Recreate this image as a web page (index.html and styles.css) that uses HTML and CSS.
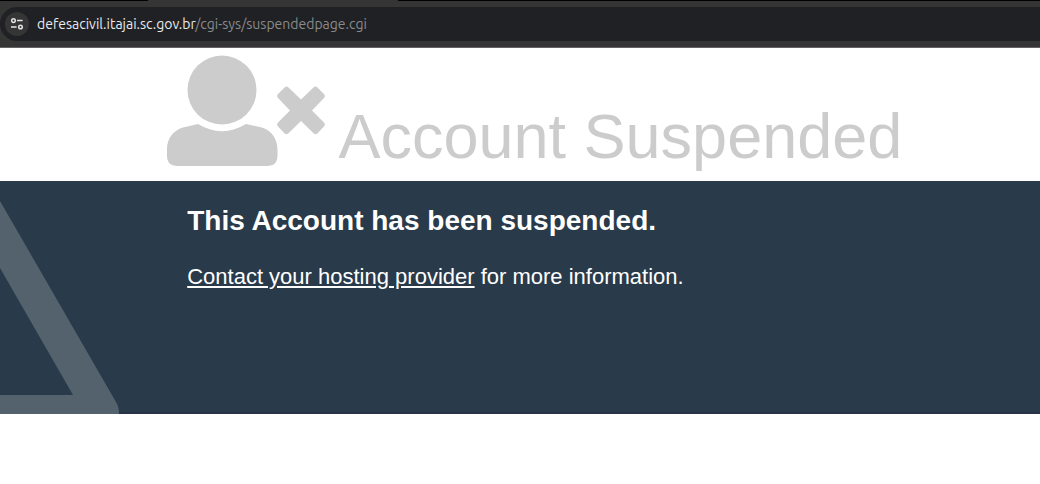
FILE: index.html
```html
<!DOCTYPE html>
<html lang="en">
<head>
    <meta charset="UTF-8">
    <meta name="viewport" content="width=device-width, initial-scale=1.0">
    <title>Account Suspended</title>
    <link rel="stylesheet" href="styles.css">
</head>
<body>
    <div class="browser">
        <div class="tabs">
            <div class="tab"></div>
        </div>
        <div class="address">
            <button class="site-info" aria-label="View site information">
                <svg width="14" height="14" viewBox="0 0 14 14" fill="none" stroke="#e3e3e3" stroke-width="1.5">
                    <circle cx="3.5" cy="3.6" r="1.8"/>
                    <path d="M7 3.6h5.6M1 10h5.6"/>
                    <circle cx="10.5" cy="10" r="1.8"/>
                </svg>
            </button>
            <span class="url">defesacivil.itajai.sc.gov.br<span class="path">/cgi-sys/suspendedpage.cgi</span></span>
        </div>
    </div>
    <header class="header">
        <svg class="user-icon" width="160" height="111" viewBox="-1 -0.5 160 111" fill="#ccc">
            <circle cx="55" cy="34.5" r="34.5"/>
            <path d="M31 68.500C46 78 64 78 79 68.500L93 71.500C104 74 110.500 83 110.500 94V100Q110.500 110.500 100 110.500H10.500Q0 110.500 0 100V94C0 83 6 75 16 72Z"/>
            <path d="M117.500 32L110.800 38.700Q109.300 40.500 110.800 42.200L123 55L110.800 67.200Q109.300 69 110.800 70.800L117.500 77.800Q119.500 79.800 121.500 77.800L134 65.500L146.500 77.800Q148.500 79.800 150.500 77.800L157.200 70.800Q158.700 69 157.200 67.200L145 55L157.200 42.200Q158.700 40.500 157.200 38.700L150.500 32Q148.500 30 146.500 32L134 44L121.500 32Q119.500 30 117.500 32Z"/>
        </svg>
        <h1>Account Suspended</h1>
    </header>
    <section class="info">
        <svg class="warning" width="120" height="214" viewBox="0 0 120 214" fill="#54626e">
            <path d="M0 1L116 202Q119 207 119 214H0V195H73L0 68Z"/>
        </svg>
        <h2>This Account has been suspended.</h2>
        <p><a href="#">Contact your hosting provider</a> for more information.</p>
    </section>
</body>
</html>
```
FILE: styles.css
```css
body {
    margin: 0;
    background: #fff;
    color: #fff;
    font-family: "Liberation Sans", Arial, sans-serif;
}
.browser {
    background: #353535;
    border-bottom: 1px solid #666164;
}
.tabs {
    height: 1px;
    margin-bottom: 6px;
    background: #000;
}
.tab {
    width: 250px;
    height: 1px;
    margin-left: 148px;
    background: #353535;
}
.address {
    display: flex;
    align-items: center;
    gap: 8px;
    height: 34px;
    margin-bottom: 6px;
    padding-left: 5px;
    background: #202124;
    border-radius: 17px 0 0 17px;
}
.site-info {
    display: flex;
    align-items: center;
    justify-content: center;
    width: 24px;
    height: 24px;
    padding: 0;
    border: none;
    border-radius: 50%;
    background: #353535;
    cursor: pointer;
}
.url {
    font-family: Ubuntu, "Open Sans", "Noto Sans", sans-serif;
    font-size: 14px;
    line-height: 20px;
    color: #e8eaed;
}
.path {
    color: #8a8b8d;
}
.header {
    display: flex;
    align-items: flex-end;
    gap: 12px;
    padding: 7px 0 15px 16%;
    color: #ccc;
}
.user-icon {
    flex: none;
}
h1 {
    margin: 0;
    font-size: 63px;
    font-weight: normal;
    line-height: 60px;
    white-space: nowrap;
}
.info {
    position: relative;
    min-height: 185px;
    padding: 24px 0 22px 18%;
    background: #293a4a;
    border-bottom: 2px solid #293348;
}
/* decorative triangle in the corner, runs over the bottom border */
.warning {
    position: absolute;
    left: 0;
    bottom: -2px;
}
h2 {
    margin: 0 0 28px;
    font-size: 28px;
    line-height: 32px;
}
p {
    margin: 0;
    font-size: 22px;
    line-height: 24px;
}
a {
    color: #fff;
}
```
